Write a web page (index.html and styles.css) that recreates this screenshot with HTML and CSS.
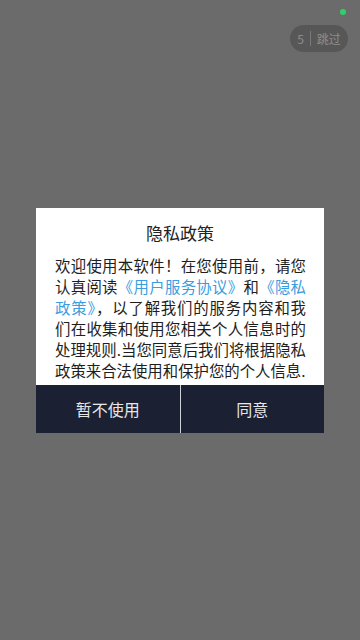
FILE: index.html
```html
<!DOCTYPE html>
<html lang="zh-CN">
<head>
<meta charset="utf-8">
<title>隐私政策</title>
<link rel="stylesheet" href="styles.css">
</head>
<body>
<div class="screen">
  <span class="status-dot"></span>
  <div class="skip"><span class="count">5</span><span class="sep"></span><span class="skip-label">跳过</span></div>
  <div class="dialog">
    <div class="title">隐私政策</div>
    <p class="content">欢迎使用本软件！在您使用前，请您认真阅读<a class="link">《用户服务协议》</a>和<a class="link">《隐私政策》</a>，以了解我们的服务内容和我们在收集和使用您相关个人信息时的处理规则.当您同意后我们将根据隐私政策来合法使用和保护您的个人信息.</p>
    <div class="actions">
      <button class="btn">暂不使用</button>
      <button class="btn">同意</button>
    </div>
  </div>
</div>
</body>
</html>
```
FILE: styles.css
```css
* { box-sizing: border-box; }
html, body { margin: 0; padding: 0; }
body {
  font-family: "Noto Sans CJK SC", "Noto Sans", sans-serif;
  background: #6b6b6b;
}
.screen {
  position: relative;
  width: 360px;
  height: 640px;
  display: flex;
  align-items: center;
  justify-content: center;
}
.status-dot {
  position: absolute;
  left: 340px;
  top: 9px;
  width: 6px;
  height: 6px;
  border-radius: 50%;
  background: #2fd06a;
}
.skip {
  position: absolute;
  left: 290px;
  top: 25px;
  width: 58px;
  height: 27px;
  border-radius: 14px;
  background: #575757;
  display: flex;
  align-items: center;
  justify-content: center;
  gap: 6px;
  color: #8e8e8e;
  font-size: 12px;
}
.skip .sep {
  width: 1px;
  height: 15px;
  background: #7a7a7a;
}
.dialog {
  width: 288px;
  background: #ffffff;
  display: flex;
  flex-direction: column;
}
.title {
  text-align: center;
  font-size: 17px;
  line-height: 24px;
  color: #222;
  padding-top: 13px;
}
.content {
  margin: 0;
  padding: 10px 18px 4px 19px;
  font-size: 15.4px;
  line-height: 21px;
  color: #1e1e1e;
  text-align: justify;
}
.link { color: #3a9de0; }
.actions {
  display: flex;
  gap: 1px;
  background: #cfd2d8;
}
.btn {
  flex: 1;
  height: 48px;
  border: 0;
  background: #1b2033;
  color: #e6e6e6;
  font-family: inherit;
  font-size: 16px;
  padding: 0;
}
```
